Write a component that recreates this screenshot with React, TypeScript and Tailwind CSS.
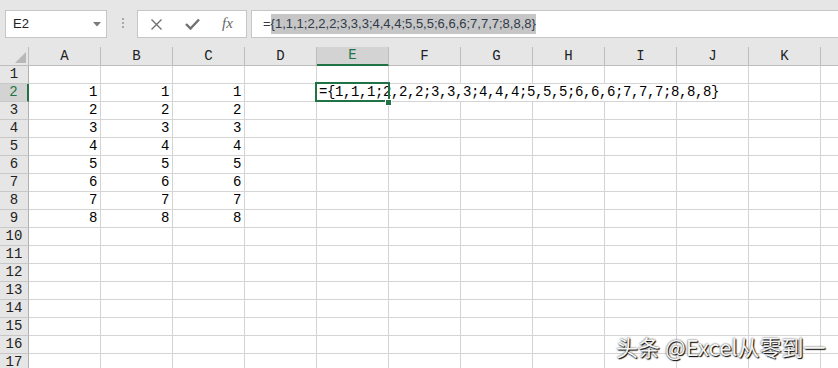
import React from 'react';

const COLS = ['A', 'B', 'C', 'D', 'E', 'F', 'G', 'H', 'I', 'J', 'K', 'L'];
const ROWS = Array.from({ length: 17 }, (_, i) => i + 1);
const FORMULA = '={1,1,1;2,2,2;3,3,3;4,4,4;5,5,5;6,6,6;7,7,7;8,8,8}';

const mono = "font-['Liberation_Mono','Noto_Sans_CJK_SC',monospace]";

function Cell({ children, className = '' }: { children?: React.ReactNode; className?: string }) {
  return (
    <div
      className={`h-[18px] border-r border-b border-[#d4d4d4] flex items-center justify-end pr-[3px] text-[14px] tracking-[-0.4px] text-black ${mono} ${className}`}
    >
      {children}
    </div>
  );
}

export default function App() {
  return (
    <div className="relative w-[838px] h-[368px] overflow-hidden bg-white">
      {/* Toolbar */}
      <div className="h-[47px] bg-[#e6e6e6] flex items-start pt-[10px] pl-[5px] font-['Liberation_Sans',Arial,sans-serif]">
        <div className="w-[102px] h-[28px] shrink-0 border border-[#c6c6c6] bg-white flex items-center justify-between pl-[7px] pr-[5px]">
          <span className="text-[13px] text-[#222]">E2</span>
          <svg width="8" height="5" viewBox="0 0 8 5">
            <path d="M0 0 L8 0 L4 4.5 Z" fill="#7a7a7a" />
          </svg>
        </div>
        <div className="ml-[15px] mt-[8px] flex flex-col gap-[2px] shrink-0">
          <div className="w-[2px] h-[2px] bg-[#a8a8a8]" />
          <div className="w-[2px] h-[2px] bg-[#a8a8a8]" />
          <div className="w-[2px] h-[2px] bg-[#a8a8a8]" />
        </div>
        <div className="ml-[13px] w-[110px] h-[28px] shrink-0 border border-[#c6c6c6] bg-white flex items-center pl-[12px] gap-[22px]">
          <svg width="13" height="13" viewBox="0 0 13 13">
            <path d="M1.5 1.5 L11.5 11.5 M11.5 1.5 L1.5 11.5" stroke="#707070" strokeWidth="1.4" fill="none" />
          </svg>
          <svg width="15" height="12" viewBox="0 0 15 12">
            <path d="M1 6 L5.5 10.5 L14 1.5" stroke="#707070" strokeWidth="2.4" fill="none" />
          </svg>
          <span className="text-[15px] italic text-[#666] font-['Liberation_Serif',serif] leading-none -mt-[2px]">fx</span>
        </div>
        <div className="ml-[4px] w-[620px] h-[28px] shrink-0 border border-[#c6c6c6] bg-white flex items-center pl-[11px]">
          <span className="text-[13px] text-[#2f3a4a] whitespace-nowrap leading-[20px]">
            =<span className="bg-[#c6c6c6] inline-block leading-[20px]">{FORMULA.slice(1)}</span>
          </span>
        </div>
      </div>

      {/* Sheet */}
      <div className="grid grid-cols-[29px_repeat(12,72px)] grid-rows-[19px] auto-rows-[18px]">
        {/* Corner */}
        <div className="h-[19px] bg-[#e6e6e6] border-r border-b border-[#bdbdbd] flex items-end justify-end pr-[2px] pb-[2px]">
          <svg width="11" height="11" viewBox="0 0 11 11">
            <path d="M11 0 L11 11 L0 11 Z" fill="#b8b8b8" />
          </svg>
        </div>
        {COLS.map((c) => (
          <div
            key={c}
            className={`h-[19px] flex items-center justify-center text-[14px] ${mono} ${
              c === 'E'
                ? 'bg-[#d3d3d3] text-[#217346] border-r border-r-[#bdbdbd] border-b-2 border-b-[#217346]'
                : 'bg-[#e6e6e6] text-[#222] border-r border-b border-[#bdbdbd]'
            }`}
          >
            {c}
          </div>
        ))}

        {ROWS.map((r) => {
          const header = (
            <div
              key={`h${r}`}
              className={`h-[18px] flex items-center justify-center text-[14px] ${mono} ${
                r === 2
                  ? 'bg-[#d3d3d3] text-[#217346] border-b border-b-[#c8c8c8] border-r-2 border-r-[#217346]'
                  : 'bg-[#e6e6e6] text-[#222] border-b border-b-[#c8c8c8] border-r border-r-[#b0b0b0]'
              }`}
            >
              {r}
            </div>
          );
          if (r === 2) {
            return (
              <React.Fragment key={r}>
                {header}
                <Cell>1</Cell>
                <Cell>1</Cell>
                <Cell>1</Cell>
                <Cell />
                <div
                  className={`col-span-6 h-[18px] border-r border-b border-[#d4d4d4] flex items-center justify-start pl-[2px] text-[14px] tracking-[-0.4px] text-black whitespace-nowrap ${mono}`}
                >
                  {FORMULA}
                </div>
                <Cell />
                <Cell />
              </React.Fragment>
            );
          }
          const v = r >= 3 && r <= 9 ? String(r - 1) : '';
          return (
            <React.Fragment key={r}>
              {header}
              {COLS.map((c, i) => (
                <Cell key={c}>{i < 3 ? v : ''}</Cell>
              ))}
            </React.Fragment>
          );
        })}
      </div>

      {/* Selection overlay */}
      <div className="absolute left-[315px] top-[82px] w-[75px] h-[20px] border-2 border-[#217346] pointer-events-none" />
      <div className="absolute left-[385px] top-[99px] w-[7px] h-[7px] bg-[#217346] border border-white" />

      {/* Watermark */}
      <div className="absolute left-[616px] top-[334px] whitespace-nowrap text-[22px] leading-[24px] text-[#f4f4f4] font-['Noto_Sans_CJK_SC','Noto_Sans',sans-serif] [text-shadow:1px_1px_1px_#000,0_0_2px_rgba(0,0,0,0.8)]">
        头条 @Excel从零到一
      </div>
    </div>
  );
}
